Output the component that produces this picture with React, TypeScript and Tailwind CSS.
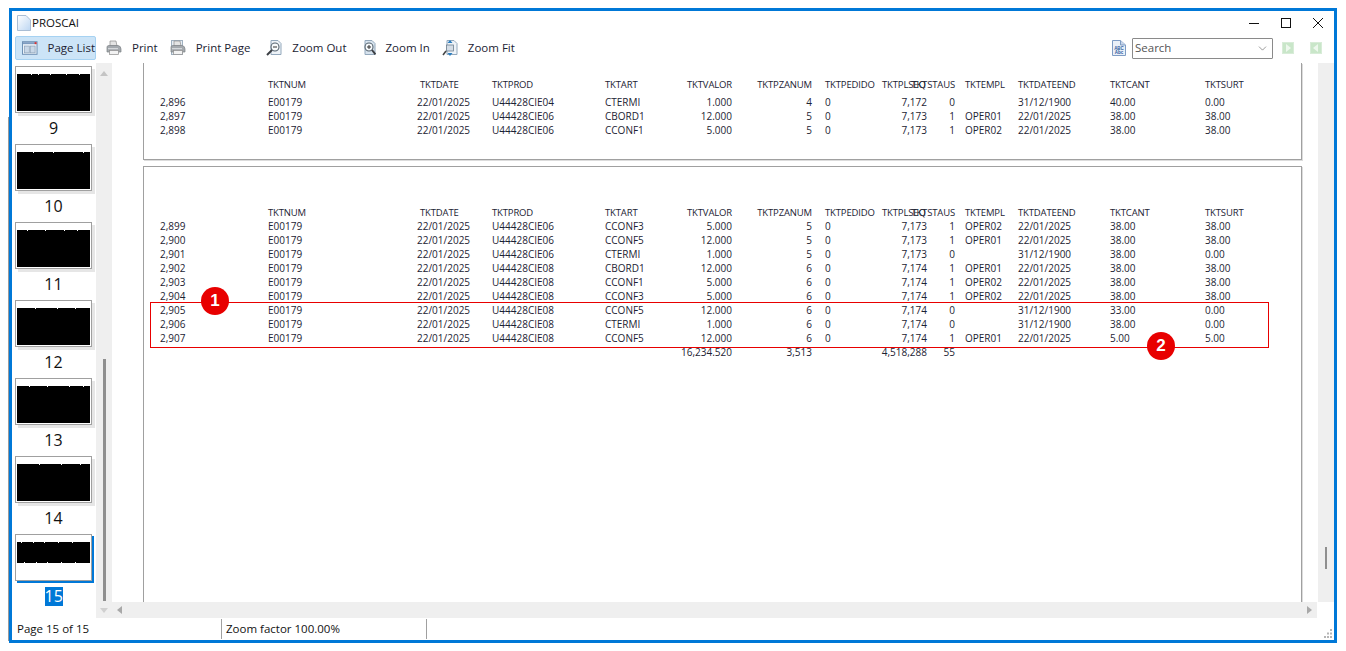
import { ChevronDown } from 'lucide-react';

const FONT = "font-['Open_Sans','Noto_Sans',sans-serif]";

const COLS =
  'grid grid-cols-[108px_149px_75px_113px_60px_67px_80px_70px_45px_28px_63px_92px_95px_80px]';

type Row = string[];

const mk = (
  num: string,
  prod: string,
  art: string,
  val: string,
  pz: string,
  pls: string,
  st: string,
  emp: string,
  end: string,
  cant: string,
  surt: string,
): Row => [num, 'E00179', '22/01/2025', prod, art, val, pz, '0', pls, st, emp, end, cant, surt];

const firstPage: Row[] = [
  mk('2,896', 'U44428CIE04', 'CTERMI', '1.000', '4', '7,172', '0', '', '31/12/1900', '40.00', '0.00'),
  mk('2,897', 'U44428CIE06', 'CBORD1', '12.000', '5', '7,173', '1', 'OPER01', '22/01/2025', '38.00', '38.00'),
  mk('2,898', 'U44428CIE06', 'CCONF1', '5.000', '5', '7,173', '1', 'OPER02', '22/01/2025', '38.00', '38.00'),
];

const secondPage: Row[] = [
  mk('2,899', 'U44428CIE06', 'CCONF3', '5.000', '5', '7,173', '1', 'OPER02', '22/01/2025', '38.00', '38.00'),
  mk('2,900', 'U44428CIE06', 'CCONF5', '12.000', '5', '7,173', '1', 'OPER01', '22/01/2025', '38.00', '38.00'),
  mk('2,901', 'U44428CIE06', 'CTERMI', '1.000', '5', '7,173', '0', '', '31/12/1900', '38.00', '0.00'),
  mk('2,902', 'U44428CIE08', 'CBORD1', '12.000', '6', '7,174', '1', 'OPER01', '22/01/2025', '38.00', '38.00'),
  mk('2,903', 'U44428CIE08', 'CCONF1', '5.000', '6', '7,174', '1', 'OPER02', '22/01/2025', '38.00', '38.00'),
  mk('2,904', 'U44428CIE08', 'CCONF3', '5.000', '6', '7,174', '1', 'OPER02', '22/01/2025', '38.00', '38.00'),
  mk('2,905', 'U44428CIE08', 'CCONF5', '12.000', '6', '7,174', '0', '', '31/12/1900', '33.00', '0.00'),
  mk('2,906', 'U44428CIE08', 'CTERMI', '1.000', '6', '7,174', '0', '', '31/12/1900', '38.00', '0.00'),
  mk('2,907', 'U44428CIE08', 'CCONF5', '12.000', '6', '7,174', '1', 'OPER01', '22/01/2025', '5.00', '5.00'),
];

// columns whose content sits against the right edge of the track
const alignClass = (i: number) => {
  if (i === 5 || i === 6 || i === 8 || i === 9) return 'flex justify-end';
  if (i === 7) return 'pl-[13px]';
  if (i === 10) return 'pl-[10px]';
  return '';
};

function ReportHeader({ className }: { className: string }) {
  const labels = ['', 'TKTNUM', 'TKTDATE', 'TKTPROD', 'TKTART', 'TKTVALOR', 'TKTPZANUM', 'TKTPEDIDO', '', 'TKTSTAUS', 'TKTEMPL', 'TKTDATEEND', 'TKTCANT', 'TKTSURT'];
  return (
    <div className={`${COLS} h-[14px] items-center text-[9.5px] leading-[14px] tracking-[-0.15px] whitespace-nowrap ${className}`}>
      {labels.map((label, i) => {
        if (i === 8) return <span key={i} className="relative"><span className="absolute left-0 top-[-7px]">TKTPLSEQ</span></span>;
        return (
          <span key={i} className={`${alignClass(i)} ${i === 2 ? 'pl-[3px]' : ''}`}>
            <span>{label}</span>
          </span>
        );
      })}
    </div>
  );
}

function ReportRow({ row }: { row: Row }) {
  return (
    <div className={`${COLS} h-[14px] items-center text-[10px] leading-[14px] whitespace-nowrap`}>
      {row.map((cell, i) => (
        <span key={i} className={alignClass(i)}>
          <span>{cell}</span>
        </span>
      ))}
    </div>
  );
}

const totals: Row = ['', '', '', '', '', '16,234.520', '3,513', '', '4,518,288', '55', '', '', '', ''];

// the page previews are illegible blobs: black band with stray pixels on its edge
function Preview({ specks, short }: { specks: number[]; short?: boolean }) {
  return (
    <svg width="73" height="43" viewBox="0 0 73 43" className="block">
      <rect x="0" y="6" width="73" height={short ? 21 : 37} fill="#000" />
      {specks.map((x) => (
        <rect key={x} x={x} y="6" width="1" height="1" fill="#fff" />
      ))}
      {short &&
        specks.map((x) => <rect key={`b${x}`} x={x + 3} y="26" width="1" height="1" fill="#fff" />)}
    </svg>
  );
}

function Thumb({ label, selected, specks }: { label: string; selected?: boolean; specks: number[] }) {
  return (
    <div className="flex flex-col items-center h-[78px] w-[77px]">
      <div className={`w-[77px] h-[47px] bg-white border border-[#a0a0a0] p-[1px] ${selected ? 'shadow-[2px_2px_0_#0078d7]' : 'shadow-[3px_3px_0_#e6e6e6]'}`}>
        <Preview specks={specks} short={selected} />
      </div>
      <div className="h-[31px] flex items-center justify-center text-[16px] text-[#111]">
        {selected ? (
          <span className="bg-[#0078d7] text-white w-[18px] h-[19px] leading-[19px] text-center">{label}</span>
        ) : (
          <span className="mt-[-1px]">{label}</span>
        )}
      </div>
    </div>
  );
}

const Tri = ({ dir, className }: { dir: 'up' | 'down' | 'left' | 'right'; className?: string }) => {
  const pts = { up: '0,8 4,3 8,8', down: '0,2 8,2 4,7', left: '6,0 6,8 1,4', right: '2,0 2,8 7,4' }[dir];
  return (
    <svg width="8" height="8" viewBox="0 0 8 8" className={className}>
      <polygon points={pts} fill="currentColor" />
    </svg>
  );
};

const PageListIcon = () => (
  <svg width="16" height="14" viewBox="0 0 16 14">
    <rect x="0.5" y="0.5" width="15" height="13" fill="#eaf1f8" stroke="#6d8fb3" />
    <rect x="1" y="1" width="14" height="2" fill="#7d9cc0" />
    <rect x="13" y="1" width="2" height="2" fill="#e03030" />
    <rect x="2.5" y="5" width="5" height="7" fill="#c9d8e8" stroke="#8a9fb6" strokeWidth="0.7" />
    <rect x="8.5" y="5" width="5" height="7" fill="#c9d8e8" stroke="#8a9fb6" strokeWidth="0.7" />
  </svg>
);

const PrinterIcon = ({ faded }: { faded?: boolean }) => (
  <svg width="16" height="16" viewBox="0 0 16 16">
    {faded && <rect x="1.5" y="0.5" width="11" height="14" fill="#e8eef4" stroke="#9fb0c0" />}
    <path d="M4 1 L10 1 L11 6 L4 6 Z" fill="#e4e4e4" stroke="#8c8c8c" strokeWidth="0.7" />
    <path d="M1 7 Q1 5.500 3 5.500 L12 5.500 Q15 6 15 9 L15 12 L1 12 Z" fill="#a4a9ae" stroke="#7c8185" strokeWidth="0.7" />
    <rect x="3.500" y="10.500" width="9" height="4" fill="#f2f2f2" stroke="#8c8c8c" strokeWidth="0.7" />
    <rect x="2" y="8" width="10" height="1.200" fill="#d5d8db" />
  </svg>
);

const ZoomIcon = ({ kind }: { kind: 'in' | 'out' | 'fit' }) => (
  <svg width="16" height="16" viewBox="0 0 16 16">
    <path d="M5 0.5 H12 L15 3.500 V14.500 H5 Z" fill={kind === 'in' ? '#d7e3ee' : '#eef3f8'} stroke="#93a8bc" />
    {kind === 'fit' ? (
      <>
        <rect x="4.500" y="5" width="7" height="6" fill="#d4dde6" stroke="#6f7f8e" strokeWidth="0.8" />
        <path d="M8 0 L5.500 3 H10.500 Z M8 16 L5.500 13 H10.500 Z" fill="#2d7fc0" />
        <path d="M1 15 L4 11" stroke="#444" strokeWidth="1.600" />
      </>
    ) : (
      <>
        <circle cx="9" cy="7" r="4" fill="#f7fafc" stroke="#55636f" strokeWidth="1.100" />
        <path d="M7 7 H11" stroke="#333" strokeWidth="1" />
        {kind === 'in' && <path d="M9 5 V9" stroke="#333" strokeWidth="1" />}
        <path d={kind === 'in' ? 'M12 10 L15.500 14.500' : 'M6 10 L1 15'} stroke="#3c3f44" strokeWidth="2" />
      </>
    )}
  </svg>
);

const AbcIcon = () => (
  <svg width="14" height="16" viewBox="0 0 14 16">
    <path d="M0.5 0.5 H8.500 L13.500 5 V15.500 H0.5 Z" fill="#eaf0f8" stroke="#7f9cc4" />
    <path d="M8.500 0.5 V5 H13.500" fill="#c7d6ea" stroke="#7f9cc4" />
    <text x="7" y="9.500" textAnchor="middle" fontSize="4.500" fontWeight="700" fill="#2f5c9e" fontFamily="Liberation Sans">ABC</text>
    <text x="7" y="14" textAnchor="middle" fontSize="4.500" fontWeight="700" fill="#2f5c9e" fontFamily="Liberation Sans">Abc</text>
  </svg>
);

const NavIcon = ({ dir }: { dir: 'left' | 'right' }) => (
  <div className="w-[12px] h-[12px] bg-[#c9e6c9] border border-[#d8ecd8] flex items-center justify-center text-[#eef8ee]">
    <Tri dir={dir} />
  </div>
);

function ToolItem({ icon, label, className }: { icon: React.ReactNode; label: string; className: string }) {
  return (
    <div className={`flex items-center h-[25px] ${className}`}>
      <span className="w-[16px] flex justify-center">{icon}</span>
      <span className="ml-[10px] text-[11.5px] text-[#1c2333] whitespace-nowrap">{label}</span>
    </div>
  );
}

const Badge = ({ n, className }: { n: number; className: string }) => (
  <div className={`absolute w-[28px] h-[28px] rounded-full bg-[#e80000] text-white flex items-center justify-center text-[17px] font-bold font-['Liberation_Sans',sans-serif] ${className}`}>
    {n}
  </div>
);

export default function App() {
  return (
    <div className={`${FONT} relative w-[1346px] h-[651px] bg-white text-[#1c2333] overflow-hidden pl-[9px] pt-[8px]`}>
      <div className="w-[1328px] h-[635px] border-[3px] border-[#0078d7] bg-white flex flex-col">
        {/* title bar */}
        <div className="h-[23px] flex items-center pl-[4px] shrink-0">
          <svg width="14" height="16" viewBox="0 0 14 16" className="ml-[1px]">
            <defs>
              <linearGradient id="doc" x1="0" y1="0" x2="1" y2="1">
                <stop offset="0" stopColor="#ffffff" />
                <stop offset="1" stopColor="#bcd6f2" />
              </linearGradient>
            </defs>
            <path d="M0.5 0.5 H9 L13.500 5 V15.500 H0.5 Z" fill="url(#doc)" stroke="#a9bdd4" />
          </svg>
          <span className="ml-[1px] text-[11.5px] text-[#111]">PROSCAI</span>
          <div className="ml-auto flex items-center gap-[22px] pr-[11px]">
            <svg width="10" height="10" viewBox="0 0 10 10"><path d="M0 5.500 H10" stroke="#111" /></svg>
            <svg width="10" height="10" viewBox="0 0 10 10"><rect x="0.5" y="0.5" width="9" height="9" fill="none" stroke="#111" /></svg>
            <svg width="10" height="10" viewBox="0 0 10 10"><path d="M0 0 L10 10 M10 0 L0 10" stroke="#111" /></svg>
          </div>
        </div>
        {/* toolbar */}
        <div className="h-[28px] flex items-center pl-[3px] pr-[12px] shrink-0">
          <div className="flex items-center h-[24px] w-[81px] pl-[6px] bg-[#cce4f7] border border-[#a6d2f2] rounded-[2px] shrink-0">
            <PageListIcon />
            <span className="ml-[10px] text-[11.5px] text-[#1c2333] whitespace-nowrap">Page List</span>
          </div>
          <ToolItem icon={<PrinterIcon />} label="Print" className="ml-[10px]" />
          <ToolItem icon={<PrinterIcon faded />} label="Print Page" className="ml-[12px]" />
          <ToolItem icon={<ZoomIcon kind="out" />} label="Zoom Out" className="ml-[16px]" />
          <ToolItem icon={<ZoomIcon kind="in" />} label="Zoom In" className="ml-[13px]" />
          <ToolItem icon={<ZoomIcon kind="fit" />} label="Zoom Fit" className="ml-[12px]" />
          <div className="ml-auto flex items-center">
            <AbcIcon />
            <div className="ml-[6px] w-[141px] h-[21px] border border-[#8a8a8a] rounded-[1px] flex items-center justify-between pl-[2px] pr-[3px] text-[11.5px] text-[#555]">
              <span>Search</span>
              <ChevronDown size={13} strokeWidth={1} className="text-[#444]" />
            </div>
            <div className="ml-[9px]"><NavIcon dir="right" /></div>
            <div className="ml-[16px]"><NavIcon dir="left" /></div>
          </div>
        </div>
        {/* body */}
        <div className="flex-1 flex min-h-0 mt-[1px]">
          <div className="w-[84px] shrink-0 overflow-hidden pt-[3px] pl-[3px] pr-[1px]">
            <div className="flex flex-col items-start">
              <Thumb label="9" specks={[14, 21, 33, 49, 62]} />
              <Thumb label="10" specks={[16, 36, 66]} />
              <Thumb label="11" specks={[10, 28, 47, 60]} />
              <Thumb label="12" specks={[18, 40, 58]} />
              <Thumb label="13" specks={[12, 30, 52, 66]} />
              <Thumb label="14" specks={[22, 44, 63]} />
              <Thumb label="15" selected specks={[4, 16, 27, 41, 55]} />
            </div>
          </div>
          <div className="flex-1 flex flex-col min-w-0">
            <div className="flex-1 flex min-h-0">
              {/* left scroll bar */}
              <div className="w-[16px] shrink-0 bg-[#efefef] flex flex-col items-center text-[#c4c4c4] pt-[5px]">
                <Tri dir="up" />
                <div className="mt-auto mb-[1px] w-[3px] h-[242px] bg-[#8f8f8f]" />
              </div>
              {/* report area */}
              <div className="flex-1 min-w-0 overflow-hidden pl-[31px] pr-[16px] text-[#1c2333]">
                <div className="h-[97px] border-x border-b border-[#a0a0a0] shadow-[1px_1px_0_#dcdcdc] pl-[16px] pt-[15px]">
                  <ReportHeader className="mb-[3px]" />
                  {firstPage.map((r) => (
                    <ReportRow key={r[0]} row={r} />
                  ))}
                </div>
                <div className="mt-[6px] h-[500px] border border-[#a0a0a0] shadow-[1px_1px_0_#dcdcdc] pl-[16px] pt-[39px]">
                  <ReportHeader className="mb-[-1px]" />
                  {secondPage.map((r) => (
                    <ReportRow key={r[0]} row={r} />
                  ))}
                  <ReportRow row={totals} />
                </div>
              </div>
              {/* right scroll bar */}
              <div className="w-[16px] shrink-0 bg-[#efefef] flex flex-col items-center">
                <div className="mt-[484px] w-[2px] h-[22px] bg-[#8f8f8f]" />
              </div>
            </div>
            {/* horizontal scroll bar */}
            <div className="h-[16px] shrink-0 mr-[17px] bg-[#efefef] flex items-center text-[#a8a8a8] relative">
              <span className="w-[16px] flex justify-center text-[#d0d0d0]"><Tri dir="down" /></span>
              <span className="ml-[4px]"><Tri dir="left" /></span>
              <span className="ml-auto mr-[4px]"><Tri dir="right" /></span>
            </div>
          </div>
        </div>
        {/* status bar */}
        <div className="h-[22px] shrink-0 flex items-center text-[11.5px] text-[#111] relative">
          <div className="w-[210px] h-[20px] pl-[5px] flex items-center border-r border-[#a0a0a0]">Page 15 of 15</div>
          <div className="w-[205px] h-[20px] pl-[4px] flex items-center border-r border-[#a0a0a0]">Zoom factor 100.00%</div>
          <svg width="10" height="10" viewBox="0 0 10 10" className="absolute right-[1px] bottom-[1px]">
            <path d="M7 0h2v2H7zM4 3.500h2v2H4zM7 3.500h2v2H7zM1 7h2v2H1zM4 7h2v2H4zM7 7h2v2H7z" fill="#b5b5b5" />
          </svg>
        </div>
      </div>

      {/* overlays: annotation rectangle and numbered badges */}
      <div className="absolute left-[150px] top-[302px] w-[1119px] h-[46px] border border-[#e80000]" />
      <Badge n={1} className="left-[201px] top-[287px]" />
      <Badge n={2} className="left-[1147px] top-[332px]" />
      <div className="absolute left-[8px] top-[117px] w-[1px] h-[524px] bg-[#9a9a9a]" />
    </div>
  );
}
